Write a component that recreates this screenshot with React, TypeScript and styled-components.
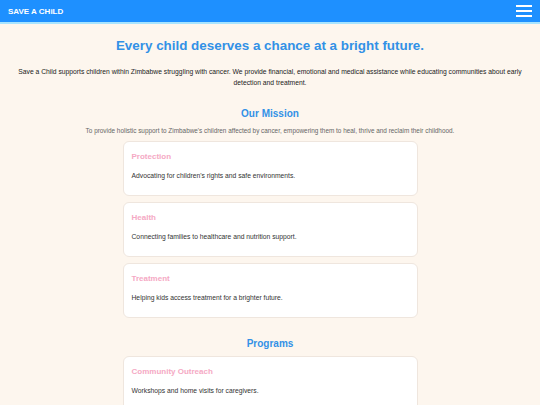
import React from "react";
import styled, { createGlobalStyle } from "styled-components";

const GlobalStyle = createGlobalStyle`
  html, body {
    margin: 0;
    padding: 0;
    background: #fdf6ee;
    font-family: "Liberation Sans", Arial, sans-serif;
  }
`;

const Header = styled.header`
  height: 22px;
  background: #1e90ff;
  border-bottom: 2px solid #a8e4ff;
  display: flex;
  align-items: center;
  justify-content: space-between;
  padding: 0 8px 0 8px;
`;

const Logo = styled.div`
  color: #fff;
  font-weight: bold;
  font-size: 8px;
`;

const MenuButton = styled.div`
  width: 16px;
  display: flex;
  flex-direction: column;
  gap: 3px;
  span {
    display: block;
    height: 2px;
    background: #fff;
  }
`;

const Main = styled.main`
  display: flex;
  flex-direction: column;
  align-items: center;
  padding: 14px 10px 0;
`;

const Headline = styled.h1`
  margin: 0;
  color: #3291e6;
  font-size: 13.4px;
  font-weight: bold;
  text-align: center;
`;

const Intro = styled.p`
  margin: 13px 0 0;
  color: #222;
  font-size: 6.75px;
  line-height: 11px;
  text-align: center;
`;

const SectionTitle = styled.h2<{ top?: number }>`
  margin: ${(p) => p.top ?? 12}px 0 0;
  color: #3291e6;
  font-size: 10px;
  font-weight: bold;
  text-align: center;
`;

const SectionText = styled.p`
  margin: 8px 0 0;
  color: #666;
  font-size: 6.4px;
  text-align: center;
`;

const CardList = styled.div`
  margin-top: 7px;
  display: flex;
  flex-direction: column;
  gap: 6px;
  width: 295px;
`;

const Card = styled.div`
  background: #fff;
  border: 1px solid #efe6de;
  border-radius: 6px;
  height: 55px;
  box-sizing: border-box;
  padding: 10px 8px 0;
`;

const CardTitle = styled.div`
  color: #f5a9c4;
  font-size: 8px;
  font-weight: bold;
`;

const CardText = styled.div`
  margin-top: 11px;
  color: #333;
  font-size: 6.75px;
`;

const mission = [
  { title: "Protection", text: "Advocating for children's rights and safe environments." },
  { title: "Health", text: "Connecting families to healthcare and nutrition support." },
  { title: "Treatment", text: "Helping kids access treatment for a brighter future." },
];

const programs = [
  { title: "Community Outreach", text: "Workshops and home visits for caregivers." },
];

export default function App() {
  return (
    <>
      <GlobalStyle />
      <Header>
        <Logo>SAVE A CHiLD</Logo>
        <MenuButton>
          <span />
          <span />
          <span />
        </MenuButton>
      </Header>
      <Main>
        <Headline>Every child deserves a chance at a bright future.</Headline>
        <Intro>
          Save a Child supports children within Zimbabwe struggling with cancer. We provide financial,
          emotional and medical assistance while educating communities about early detection and
          treatment.
        </Intro>
        <SectionTitle top={20}>Our Mission</SectionTitle>
        <SectionText>
          To provide holistic support to Zimbabwe's children affected by cancer, empowering them to heal,
          thrive and reclaim their childhood.
        </SectionText>
        <CardList>
          {mission.map((m) => (
            <Card key={m.title}>
              <CardTitle>{m.title}</CardTitle>
              <CardText>{m.text}</CardText>
            </Card>
          ))}
        </CardList>
        <SectionTitle top={20}>Programs</SectionTitle>
        <CardList>
          {programs.map((m) => (
            <Card key={m.title}>
              <CardTitle>{m.title}</CardTitle>
              <CardText>{m.text}</CardText>
            </Card>
          ))}
        </CardList>
      </Main>
    </>
  );
}
